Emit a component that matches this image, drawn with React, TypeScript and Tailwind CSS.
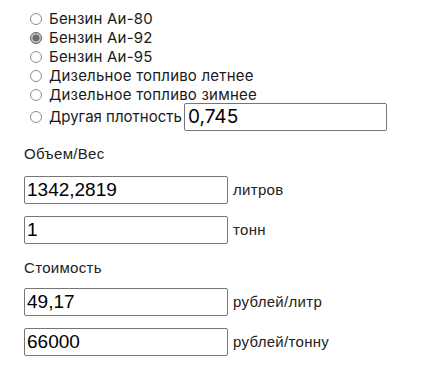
import React from "react";

const radios = [
  "Бензин Аи-80",
  "Бензин Аи-92",
  "Бензин Аи-95",
  "Дизельное топливо летнее",
  "Дизельное топливо зимнее",
];

function Radio({ checked }: { checked?: boolean }) {
  return (
    <span
      className={
        "inline-block w-[12px] h-[12px] rounded-full border shrink-0 " +
        (checked
          ? "border-[#5a5a5a] bg-[radial-gradient(circle,#6b6b6b_0,#6b6b6b_3px,#c8c8c8_4px)]"
          : "border-[#8f8f8f] bg-white")
      }
    />
  );
}

function Field({ value, unit }: { value: string; unit: string }) {
  return (
    <div className="flex items-center gap-[5px] h-[28px]">
      <div className="w-[204px] h-[28px] border border-[#767676] rounded-[2px] flex items-center pl-[2px] text-[19px] text-black font-['Liberation_Sans',Arial,sans-serif]">
        {value}
      </div>
      <span className="text-[15px] tracking-[0.3px] text-[#222] font-['Liberation_Sans',Arial,sans-serif]">{unit}</span>
    </div>
  );
}

export default function App() {
  return (
    <div className="w-[430px] h-[371px] bg-white relative overflow-hidden">
      <div className="pl-[30px] pt-[9px] flex flex-col font-['Inter',sans-serif] text-[15px] text-[#1a1a1a]">
        {radios.map((r, i) => (
          <div key={r} className="flex items-center gap-[7px] h-[19px]">
            <Radio checked={i === 1} />
            <span className="leading-[19px] tracking-[0.2px]">{r}</span>
          </div>
        ))}
        <div className="flex items-center gap-[7px] h-[28px] mt-[-1px]">
          <Radio />
          <span className="w-[128px] whitespace-nowrap">Другая плотность</span>
          <div className="w-[203px] h-[28px] border border-[#767676] rounded-[2px] flex items-center pl-[3px] text-[19px] text-black">
            0,745
          </div>
        </div>
      </div>
      <div className="pl-[24px] flex flex-col font-['Liberation_Sans',Arial,sans-serif]">
        <div className="text-[15px] tracking-[0.3px] text-[#222] mt-[12px] h-[33px]">Объем/Вес</div>
        <div className="flex flex-col gap-[12px]">
          <Field value="1342,2819" unit="литров" />
          <Field value="1" unit="тонн" />
        </div>
        <div className="text-[15px] tracking-[0.3px] text-[#222] mt-[13px] h-[31px]">Стоимость</div>
        <div className="flex flex-col gap-[12px]">
          <Field value="49,17" unit="рублей/литр" />
          <Field value="66000" unit="рублей/тонну" />
        </div>
      </div>
    </div>
  );
}
